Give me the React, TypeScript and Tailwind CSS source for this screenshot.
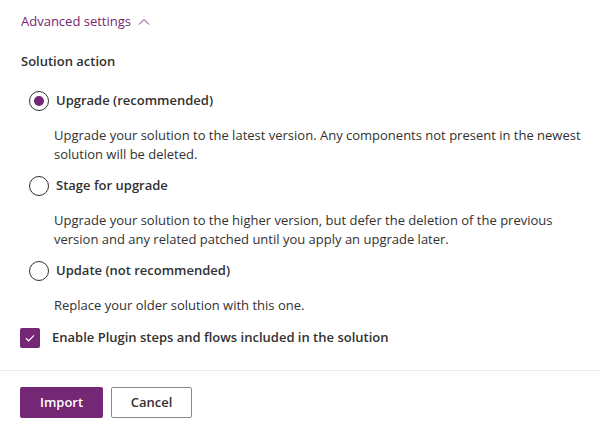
import React from "react";

const font = { fontFamily: '"Segoe UI", "Open Sans", sans-serif' };

function Radio({ checked }: { checked?: boolean }) {
  return (
    <span className="flex h-[20px] w-[20px] shrink-0 items-center justify-center rounded-full border border-[#323130] bg-white">
      {checked && <span className="h-[10px] w-[10px] rounded-full bg-[#742774]" />}
    </span>
  );
}

function Option({ label, desc, checked }: { label: string; desc: React.ReactNode; checked?: boolean }) {
  return (
    <div className="flex flex-col">
      <div className="flex h-[20px] items-center gap-[7px] pl-[29px]">
        <Radio checked={checked} />
        <span className="text-[13px] font-semibold text-[#323130]">{label}</span>
      </div>
      <div className="mt-[15px] pl-[54px] text-[13px] leading-[19px] whitespace-nowrap text-[#323130]">{desc}</div>
    </div>
  );
}

export default function App() {
  return (
    <div className="h-[429px] w-[600px] overflow-hidden bg-white" style={font}>
      <div className="px-[21px] pt-[12px]">
        <div className="flex h-[20px] items-center gap-[6px] text-[13px] text-[#742774]">
          <span>Advanced settings</span>
          <svg width="14" height="14" viewBox="0 0 14 14" fill="none">
            <path d="M2 9.5 L7 4.5 L12 9.5" stroke="#742774" strokeWidth="1" />
          </svg>
        </div>
        <div className="mt-[20px] flex h-[20px] items-center text-[13px] font-semibold text-[#323130]">Solution action</div>
      </div>
      <div className="mt-[19px] flex flex-col gap-[12px]">
        <Option
          checked
          label="Upgrade (recommended)"
          desc={<>Upgrade your solution to the latest version. Any components not present in the newest<br />solution will be deleted.</>}
        />
        <Option
          label="Stage for upgrade"
          desc={<>Upgrade your solution to the higher version, but defer the deletion of the previous<br />version and any related patched until you apply an upgrade later.</>}
        />
        <Option label="Update (not recommended)" desc="Replace your older solution with this one." />
      </div>
      <div className="mt-[13px] flex h-[20px] items-center gap-[12px] px-[20px]">
        <span className="flex h-[20px] w-[20px] items-center justify-center rounded-[2px] bg-[#742774]">
          <svg width="12" height="12" viewBox="0 0 12 12" fill="none">
            <path d="M2 6.3 L4.6 8.8 L10 3.4" stroke="white" strokeWidth="1.2" />
          </svg>
        </span>
        <span className="text-[13px] font-semibold text-[#323130]">Enable Plugin steps and flows included in the solution</span>
      </div>
      <div className="mt-[22px] border-t border-[#edebe9]" />
      <div className="flex gap-[8px] px-[20px] pt-[16px]">
        <button className="h-[31px] w-[83px] rounded-[2px] bg-[#742774] text-[13px] font-semibold text-white">Import</button>
        <button className="h-[31px] w-[81px] rounded-[2px] border border-[#8a8886] bg-white text-[13px] font-semibold text-[#323130]">Cancel</button>
      </div>
    </div>
  );
}
